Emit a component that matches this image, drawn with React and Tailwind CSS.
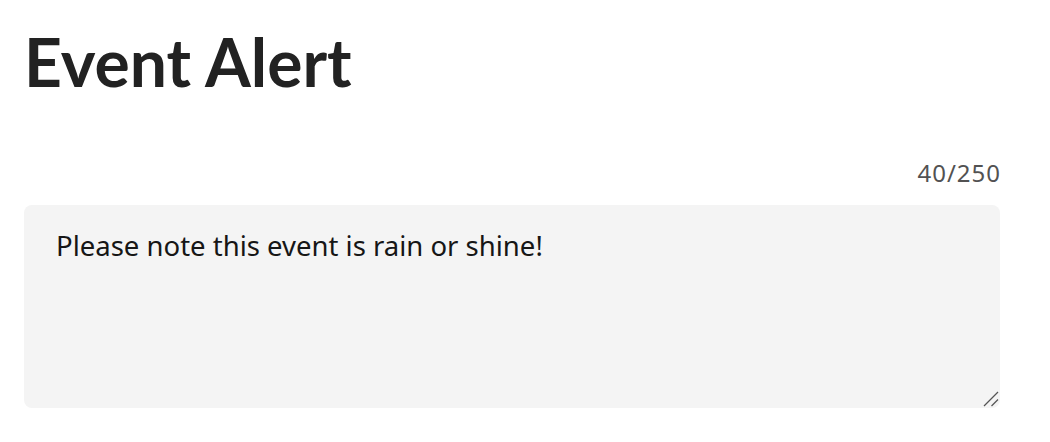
export default function App() {
  return (
    <div className="w-[1050px] h-[442px] bg-white pl-6 pr-[50px] pt-[22px]">
      <h1 className="font-['Lato',sans-serif] font-bold text-[66px] leading-[80px] text-[#222222]">Event Alert</h1>
      <div className="mt-[56px] flex justify-end">
        <span className="font-['Noto_Sans',sans-serif] text-[24px] leading-[30px] tracking-[1px] text-[#525252] mr-[-1px]">40/250</span>
      </div>
      <div className="relative mt-[17px]">
        <textarea
          className="block w-full h-[203px] rounded-lg bg-[#f4f4f4] px-8 py-[23px] font-['Noto_Sans',sans-serif] text-[27.5px] leading-[36px] text-[#161616] outline-none resize-none"
          defaultValue="Please note this event is rain or shine!"
        />
        <svg className="absolute right-[1px] bottom-[1px] pointer-events-none" width="16" height="16" viewBox="0 0 16 16">
          <line x1="1" y1="15" x2="15" y2="1" stroke="#555555" strokeWidth="1.3" />
          <line x1="8.5" y1="15" x2="15" y2="8.5" stroke="#555555" strokeWidth="1.3" />
        </svg>
      </div>
    </div>
  );
}
